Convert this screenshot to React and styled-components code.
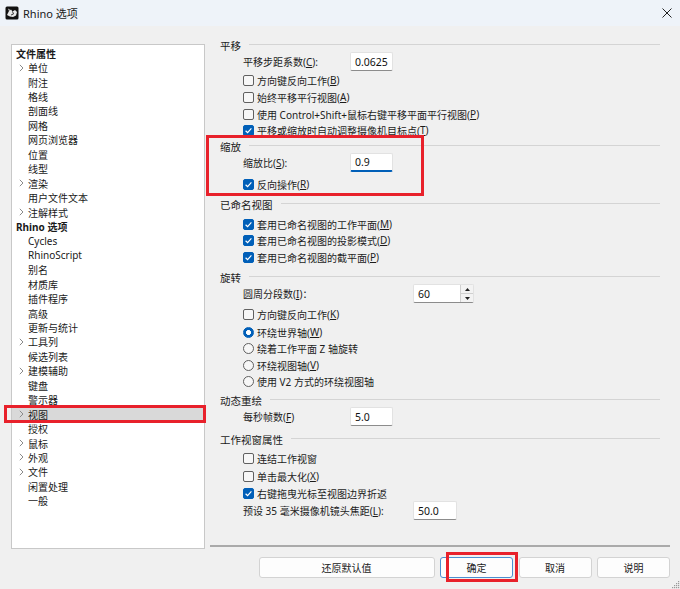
import React from 'react'
import styled, { createGlobalStyle } from 'styled-components'

const GlobalStyle = createGlobalStyle`
  html, body { margin: 0; padding: 0; background: #f0f0f0; }
  body { font-family: "Noto Sans", "Noto Sans CJK SC", sans-serif; color: #1c1c1c; }
  * { box-sizing: border-box; }
`

const treeItems = [
  { t: '文件属性', head: true },
  { t: '单位', arrow: true },
  { t: '附注' },
  { t: '格线' },
  { t: '剖面线' },
  { t: '网格' },
  { t: '网页浏览器' },
  { t: '位置' },
  { t: '线型' },
  { t: '渲染', arrow: true },
  { t: '用户文件文本' },
  { t: '注解样式', arrow: true },
  { t: 'Rhino 选项', head: true },
  { t: 'Cycles' },
  { t: 'RhinoScript' },
  { t: '别名' },
  { t: '材质库' },
  { t: '插件程序' },
  { t: '高级' },
  { t: '更新与统计' },
  { t: '工具列', arrow: true },
  { t: '候选列表' },
  { t: '建模辅助', arrow: true },
  { t: '键盘' },
  { t: '警示器' },
  { t: '视图', arrow: true, selected: true },
  { t: '授权' },
  { t: '鼠标', arrow: true },
  { t: '外观', arrow: true },
  { t: '文件', arrow: true },
  { t: '闲置处理' },
  { t: '一般' },
]

function Acc({ text }) {
  const m = text.match(/^(.*\()([A-Z])(\).*)$/)
  if (!m) return text
  return (
    <>
      {m[1]}
      <u>{m[2]}</u>
      {m[3]}
    </>
  )
}

function Check({ label, checked, mt }) {
  return (
    <OptRow $mt={mt}>
      <Box $on={checked}>
        {checked && (
          <svg width="9" height="9" viewBox="0 0 9 9">
            <path d="M1.6 4.7 L3.6 6.6 L7.4 2.4" fill="none" stroke="#fff" strokeWidth="1.2" />
          </svg>
        )}
      </Box>
      <Acc text={label} />
    </OptRow>
  )
}

function Radio({ label, checked, mt }) {
  return (
    <OptRow $mt={mt}>
      <Dot $on={checked} />
      <Acc text={label} />
    </OptRow>
  )
}

function Field({ label, value, mt, labelW = 107, width = 43, focus, spin }) {
  return (
    <FieldRow $mt={mt}>
      <FieldLabel $w={labelW}>
        <Acc text={label} />
      </FieldLabel>
      <Input $w={width} $focus={focus}>
        {value}
        {spin && (
          <Spin>
            <SpinBtn>
              <svg width="5" height="3" viewBox="0 0 5 3"><path d="M0 3 L2.5 0 L5 3Z" fill="#222" /></svg>
            </SpinBtn>
            <SpinBtn>
              <svg width="5" height="3" viewBox="0 0 5 3"><path d="M0 0 L2.5 3 L5 0Z" fill="#222" /></svg>
            </SpinBtn>
          </Spin>
        )}
      </Input>
    </FieldRow>
  )
}

export default function App() {
  return (
    <Window>
      <GlobalStyle />
      <TitleBar>
        <svg width="14" height="14" viewBox="0 0 14 14">
          <rect x="0.5" y="0.5" width="13" height="13" rx="1.5" fill="#111" />
          <path d="M2 9 L4 5 L6 3.5 L7.5 5.5 L10 4 L12 6 L11 9.5 L8 11 L5 10.5 Z" fill="#e8e8e8" />
          <path d="M4 5 L3 2.5 L5.2 4" fill="#e8e8e8" />
          <path d="M7.5 5.5 L8.5 8 L6 9" fill="none" stroke="#111" strokeWidth="0.8" />
        </svg>
        <Title>Rhino 选项</Title>
        <Close>
          <svg width="10" height="10" viewBox="0 0 10 10">
            <path d="M0.5 0.5 L9.5 9.5 M9.5 0.5 L0.5 9.5" stroke="#222" strokeWidth="1" />
          </svg>
        </Close>
      </TitleBar>

      <Body>
        <Tree>
          {treeItems.map((it) => (
            <TreeRow key={it.t} $head={it.head} $sel={it.selected}>
              {!it.head && (
                <Chevron>
                  {it.arrow && (
                    <svg width="5" height="8" viewBox="0 0 5 8">
                      <path d="M0.8 0.8 L4 4 L0.8 7.2" fill="none" stroke="#8a8a8a" strokeWidth="1" />
                    </svg>
                  )}
                </Chevron>
              )}
              {it.t}
            </TreeRow>
          ))}
        </Tree>

        <Panel>
          <Header $mt={1}>平移</Header>
          <Field label="平移步距系数(C):" value="0.0625" />
          <Check label="方向键反向工作(B)" mt={2} />
          <Check label="始终平移平行视图(A)" mt={1} />
          <Check label="使用 Control+Shift+鼠标右键平移平面平行视图(P)" mt={1} />
          <Check label="平移或缩放时自动调整摄像机目标点(T)" checked />

          <Header>缩放</Header>
          <Field label="缩放比(S):" value="0.9" focus />
          <Check label="反向操作(R)" checked mt={5} />

          <Header $mt={4}>已命名视图</Header>
          <Check label="套用已命名视图的工作平面(M)" checked mt={4} />
          <Check label="套用已命名视图的投影模式(D)" checked />
          <Check label="套用已命名视图的截平面(P)" checked mt={1} />

          <Header $mt={4}>旋转</Header>
          <Field label="圆周分段数(I)：" value="60" labelW={170} width={61} spin />
          <Check label="方向键反向工作(K)" mt={4} />
          <Radio label="环绕世界轴(W)" checked mt={2} />
          <Radio label="绕着工作平面 Z 轴旋转" />
          <Radio label="环绕视图轴(V)" mt={1} />
          <Radio label="使用 V2 方式的环绕视图轴" />

          <Header $mt={3}>动态重绘</Header>
          <Field label="每秒帧数(F)" value="5.0" />

          <Header $mt={6}>工作视窗属性</Header>
          <Check label="连结工作视窗" mt={3} />
          <Check label="单击最大化(X)" mt={2} />
          <Check label="右键拖曳光标至视图边界折返" checked mt={1} />
          <Field label="预设 35 毫米摄像机镜头焦距(L):" value="50.0" labelW={170} width={44} mt={1} />
        </Panel>
      </Body>

      <Footer>
        <Button $w={176}>还原默认值</Button>
        <Button $w={73} $primary>确定</Button>
        <Button $w={73}>取消</Button>
        <Button $w={73}>说明</Button>
      </Footer>

      <Grip>
        <svg width="10" height="10" viewBox="0 0 10 10" fill="#9a9a9a">
          <rect x="8" y="2" width="1.2" height="1.2" />
          <rect x="6" y="4" width="1.2" height="1.2" />
          <rect x="8" y="4" width="1.2" height="1.2" />
          <rect x="4" y="6" width="1.2" height="1.2" />
          <rect x="6" y="6" width="1.2" height="1.2" />
          <rect x="8" y="6" width="1.2" height="1.2" />
          <rect x="2" y="8" width="1.2" height="1.2" />
          <rect x="4" y="8" width="1.2" height="1.2" />
          <rect x="6" y="8" width="1.2" height="1.2" />
          <rect x="8" y="8" width="1.2" height="1.2" />
        </svg>
      </Grip>

      <Mark $x={206} $y={135} $w={218} $h={61} />
      <Mark $x={4} $y={405} $w={202} $h={18} />
      <Mark $x={446} $y={552} $w={72} $h={30} />
    </Window>
  )
}

const Window = styled.div`
  position: relative;
  width: 680px;
  height: 589px;
  overflow: hidden;
  background: #f0f0f0;
  display: flex;
  flex-direction: column;
`
const TitleBar = styled.div`
  height: 26px;
  flex: none;
  background: #eef3f9;
  display: flex;
  align-items: center;
  padding: 0 8px 0 5px;
`
const Title = styled.span`
  margin-left: 4px;
  font-size: 11px;
  color: #1a1a1a;
`
const Close = styled.div`
  margin-left: auto;
  width: 10px;
  height: 10px;
  display: flex;
`
const Body = styled.div`
  display: flex;
  padding: 10px 10px 0 11px;
`
const Tree = styled.div`
  width: 194px;
  height: 505px;
  margin-top: 8px;
  background: #fff;
  border: 1px solid #c8c8c8;
  padding-top: 1px;
`
const TreeRow = styled.div`
  height: 14.45px;
  display: flex;
  align-items: center;
  padding-left: ${(p) => (p.$head ? '4px' : '7px')};
  font-size: 10px;
  font-weight: ${(p) => (p.$head ? 700 : 400)};
  color: #1a1a1a;
  background: ${(p) => (p.$sel ? '#d9d9d9' : 'transparent')};
  white-space: nowrap;
`
const Chevron = styled.span`
  width: 9px;
  display: flex;
  align-items: center;
`
const Panel = styled.div`
  width: 460px;
  height: 511px;
  margin-left: 5px;
  padding: 0 10px;
  border-bottom: 2px solid #aaaaaa;
  display: flex;
  flex-direction: column;
`
const Header = styled.div`
  height: 16px;
  margin-top: ${(p) => p.$mt || 0}px;
  display: flex;
  align-items: center;
  font-size: 10.5px;
  color: #1a1a1a;
  &::after {
    content: '';
    flex: 1;
    height: 1px;
    margin-left: 8px;
    margin-top: -2px;
    background: #d4d4d4;
  }
`
const OptRow = styled.div`
  height: 16px;
  margin-top: ${(p) => p.$mt || 0}px;
  padding-left: 23px;
  display: flex;
  align-items: center;
  font-size: 10px;
  color: #1c1c1c;
  white-space: nowrap;
  u { text-underline-offset: 1px; }
`
const Box = styled.span`
  width: 11px;
  height: 11px;
  margin-right: 3px;
  border-radius: 2px;
  border: 1px solid ${(p) => (p.$on ? '#005fb8' : '#606060')};
  background: ${(p) => (p.$on ? '#005fb8' : '#f7f7f7')};
  display: flex;
  align-items: center;
  justify-content: center;
  flex: none;
`
const Dot = styled.span`
  width: 11px;
  height: 11px;
  margin-right: 3px;
  border-radius: 50%;
  flex: none;
  border: 1px solid ${(p) => (p.$on ? '#005fb8' : '#606060')};
  background: ${(p) => (p.$on ? 'radial-gradient(circle, #fff 0 2.2px, #005fb8 2.6px)' : '#f7f7f7')};
`
const FieldRow = styled.div`
  height: 17px;
  margin-top: ${(p) => p.$mt || 0}px;
  padding-left: 23px;
  display: flex;
  align-items: center;
  font-size: 10px;
  white-space: nowrap;
  u { text-underline-offset: 1px; }
`
const FieldLabel = styled.span`
  width: ${(p) => p.$w}px;
  flex: none;
`
const Input = styled.div`
  position: relative;
  width: ${(p) => p.$w}px;
  height: 19px;
  flex: none;
  background: #fff;
  border: 1px solid #e2e2e2;
  border-bottom: ${(p) => (p.$focus ? '2px solid #005fb8' : '1px solid #8c8c8c')};
  border-radius: 2px;
  padding-left: 4px;
  display: flex;
  align-items: center;
  font-size: 10.5px;
  color: #111;
`
const Spin = styled.div`
  position: absolute;
  right: 0;
  top: 0;
  bottom: 0;
  width: 13px;
  display: flex;
  flex-direction: column;
  border-left: 1px solid #d0d0d0;
`
const SpinBtn = styled.div`
  flex: 1;
  display: flex;
  align-items: center;
  justify-content: center;
  background: #f3f3f3;
  & + & { border-top: 1px solid #d0d0d0; }
`
const Footer = styled.div`
  display: flex;
  justify-content: flex-end;
  gap: 5.5px;
  padding: 8px 10px 0 0;
`
const Button = styled.div`
  width: ${(p) => p.$w}px;
  height: 21px;
  background: #fdfdfd;
  border: 1px solid ${(p) => (p.$primary ? '#4b8fd0' : '#d3d3d3')};
  border-radius: 3px;
  display: flex;
  align-items: center;
  justify-content: center;
  font-size: 10px;
  color: #1a1a1a;
`
const Grip = styled.div`
  position: absolute;
  right: 0;
  bottom: 0;
  width: 10px;
  height: 10px;
  display: flex;
`
const Mark = styled.div`
  position: absolute;
  left: ${(p) => p.$x}px;
  top: ${(p) => p.$y}px;
  width: ${(p) => p.$w}px;
  height: ${(p) => p.$h}px;
  border: 3px solid #e8212b;
  pointer-events: none;
`
